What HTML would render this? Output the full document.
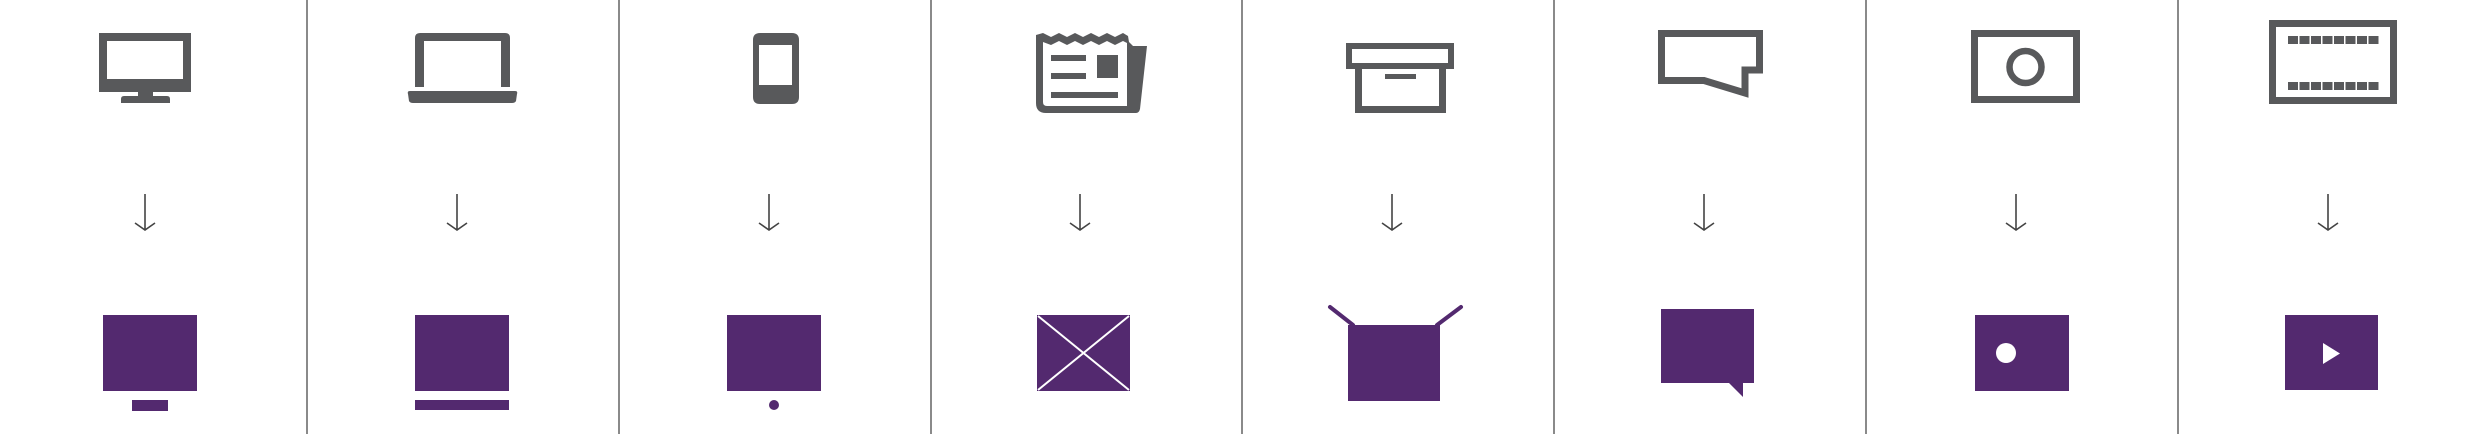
<!DOCTYPE html>
<html><head><meta charset="utf-8"><style>html,body{margin:0;padding:0;background:#fff;}svg{display:block}</style></head>
<body>
<svg width="2486" height="434" viewBox="0 0 2486 434" xmlns="http://www.w3.org/2000/svg">
<g fill="#8a8a8a">
<rect x="306" y="0" width="2" height="434"/><rect x="618" y="0" width="2" height="434"/><rect x="930" y="0" width="2" height="434"/><rect x="1241" y="0" width="2" height="434"/><rect x="1553" y="0" width="2" height="434"/><rect x="1865" y="0" width="2" height="434"/><rect x="2177" y="0" width="2" height="434"/>
</g>
<g fill="#58595b">
<!-- monitor -->
<path fill-rule="evenodd" d="M99,33H191V92H99Z M107,41V79H183V41Z"/>
<rect x="138" y="91" width="15" height="6"/>
<path d="M124,96H167Q170,96 170,99V103H121V99Q121,96 124,96Z"/>
<!-- laptop -->
<path fill-rule="evenodd" d="M420,33H505Q510,33 510,38V87H501V41H424V87H415V38Q415,33 420,33Z"/>
<path d="M410,91H515Q518,91 517,94L516,101Q515,103 512,103H413Q410,103 409,101L408,94Q407,91 410,91Z"/>
<!-- phone -->
<path fill-rule="evenodd" d="M760,33H792Q799,33 799,40V97Q799,104 792,104H760Q753,104 753,97V40Q753,33 760,33Z M759,45V85H792V45Z"/>
<!-- newspaper -->
<path d="M1036,35L1043,33L1051,37L1059,33L1067,37L1075,33L1083,37L1091,33L1099,37L1107,33L1115,37L1123,33L1128,36L1129,42L1133,46L1147,46L1140,109Q1139,113 1136,113H1046Q1036,113 1036,103Z"/>
<path fill="#fff" d="M1043,42L1051,45L1059,41L1067,45L1075,41L1083,45L1091,41L1099,45L1107,41L1115,45L1123,41L1127,43V106H1047Q1043,106 1043,102Z"/>
<rect x="1051" y="55" width="35" height="6"/><rect x="1051" y="73" width="35" height="6"/><rect x="1097" y="55" width="21" height="23"/><rect x="1051" y="92" width="67" height="6"/>
<!-- box -->
<path fill-rule="evenodd" d="M1346,43H1454V69H1346Z M1352,49V63H1448V49Z"/>
<path fill-rule="evenodd" d="M1355,68H1446V113H1355Z M1362,69V106H1439V69Z"/>
<rect x="1385" y="74" width="31" height="5"/>
<!-- photo -->
<path fill-rule="evenodd" d="M1971,30H2080V103H1971Z M1978,37V96H2073V37Z"/>
<!-- ticket -->
<path fill-rule="evenodd" d="M2269,20H2397V104H2269Z M2276,27V97H2390V27Z"/>
</g>
<!-- speech outline -->
<path d="M1661.5,33.5H1759.5V70H1745V93L1704,80.5H1661.5Z" fill="none" stroke="#58595b" stroke-width="7"/>
<circle cx="2025.5" cy="67" r="16" fill="none" stroke="#58595b" stroke-width="6.5"/>
<g fill="#58595b">
<rect x="2288" y="36" width="10" height="8"/><rect x="2299.5" y="36" width="10" height="8"/><rect x="2311" y="36" width="10" height="8"/><rect x="2322.5" y="36" width="10" height="8"/><rect x="2334" y="36" width="10" height="8"/><rect x="2345.5" y="36" width="10" height="8"/><rect x="2357" y="36" width="10" height="8"/><rect x="2368.5" y="36" width="10" height="8"/>
<rect x="2288" y="82" width="10" height="8"/><rect x="2299.5" y="82" width="10" height="8"/><rect x="2311" y="82" width="10" height="8"/><rect x="2322.5" y="82" width="10" height="8"/><rect x="2334" y="82" width="10" height="8"/><rect x="2345.5" y="82" width="10" height="8"/><rect x="2357" y="82" width="10" height="8"/><rect x="2368.5" y="82" width="10" height="8"/>
</g>
<!-- arrows -->
<g fill="none" stroke="#444" stroke-width="1.6">
<path d="M145,194V229M135,223L145,230L155,223"/>
<path d="M457,194V229M447,223L457,230L467,223"/>
<path d="M769,194V229M759,223L769,230L779,223"/>
<path d="M1080,194V229M1070,223L1080,230L1090,223"/>
<path d="M1392,194V229M1382,223L1392,230L1402,223"/>
<path d="M1704,194V229M1694,223L1704,230L1714,223"/>
<path d="M2016,194V229M2006,223L2016,230L2026,223"/>
<path d="M2328,194V229M2318,223L2328,230L2338,223"/>
</g>
<!-- bottom row -->
<g fill="#53296f">
<rect x="103" y="315" width="94" height="76"/><rect x="132" y="400" width="36" height="11"/>
<rect x="415" y="315" width="94" height="76"/><rect x="415" y="400" width="94" height="10"/>
<rect x="727" y="315" width="94" height="76"/><circle cx="774" cy="405" r="5"/>
<rect x="1037" y="315" width="93" height="76"/>
<rect x="1348" y="325" width="92" height="76"/>
<path d="M1661,309H1754V383H1743V397L1729,383H1661Z"/>
<rect x="1975" y="315" width="94" height="76"/>
<rect x="2285" y="315" width="93" height="75"/>
</g>
<path d="M1038,316L1129,390M1129,316L1038,390" stroke="#fff" stroke-width="2"/>
<path d="M1330,307L1353,325M1461,307L1437,325" stroke="#53296f" stroke-width="4" stroke-linecap="round"/>
<circle cx="2006" cy="353" r="10" fill="#fff"/>
<path d="M2323,343L2340,353.5L2323,364Z" fill="#fff"/>
</svg>
</body></html>
